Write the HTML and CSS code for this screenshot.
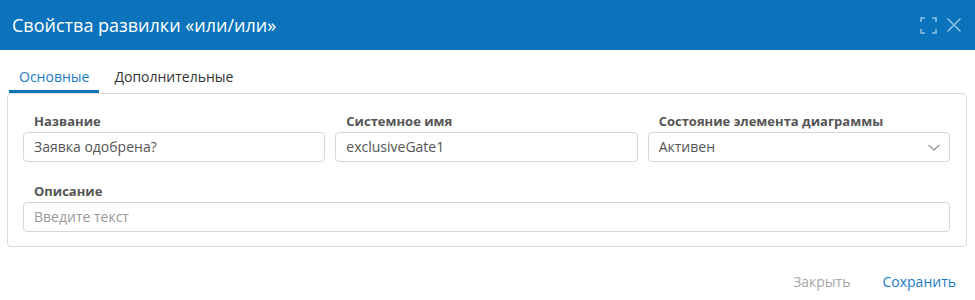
FILE: index.html
```html
<!DOCTYPE html>
<html lang="ru">
<head>
<meta charset="utf-8">
<link rel="stylesheet" href="styles.css">
</head>
<body>
<div class="dialog">
  <div class="header">
    <div class="title">Свойства развилки «или/или»</div>
    <div class="header-icons">
      <svg class="icon" width="17" height="17" viewBox="0 0 17 17" fill="none" stroke="currentColor" stroke-width="1.6">
        <path d="M1 5V1h4M12 1h4v4M16 12v4h-4M5 16H1v-4"/>
      </svg>
      <svg class="icon" width="16" height="16" viewBox="0 0 16 16" fill="none" stroke="currentColor" stroke-width="1.6">
        <path d="M1.5 1.5l13 13M14.5 1.5l-13 13"/>
      </svg>
    </div>
  </div>
  <div class="tabs">
    <div class="tab active">Основные</div>
    <div class="tab">Дополнительные</div>
  </div>
  <div class="panel">
    <div class="grid">
      <div class="field">
        <div class="label">Название</div>
        <div class="input">Заявка одобрена?</div>
      </div>
      <div class="field">
        <div class="label">Системное имя</div>
        <div class="input">exclusiveGate1</div>
      </div>
      <div class="field">
        <div class="label">Состояние элемента диаграммы</div>
        <div class="input select">
          <span>Активен</span>
          <svg class="chevron" width="12" height="7" viewBox="0 0 12 7" fill="none" stroke="#888" stroke-width="1.1">
            <path d="M0.5 0.8l5.5 5.2 5.5-5.2"/>
          </svg>
        </div>
      </div>
      <div class="field wide">
        <div class="label">Описание</div>
        <div class="input placeholder">Введите текст</div>
      </div>
    </div>
  </div>
  <div class="footer">
    <span class="btn btn-close">Закрыть</span>
    <span class="btn btn-save">Сохранить</span>
  </div>
</div>
</body>
</html>
```
FILE: styles.css
```css
* { box-sizing: border-box; }
html, body { margin: 0; padding: 0; background: #fff; }
body {
  font-family: "Open Sans", "Noto Sans", sans-serif;
  color: #333;
  width: 975px;
  height: 300px;
  overflow: hidden;
}
.header {
  height: 50px;
  background: #0a73bc;
  display: flex;
  align-items: center;
  justify-content: space-between;
  padding: 0 13px 0 12px;
}
.title {
  color: #fff;
  font-size: 18px;
  line-height: 24px;
}
.header-icons {
  display: flex;
  align-items: center;
  gap: 9px;
  color: #8fc0e6;
}
.icon { display: block; }
.tabs {
  height: 43px;
  display: flex;
  align-items: flex-end;
  padding-left: 9px;
}
.tab {
  font-size: 14px;
  line-height: 20px;
  padding: 0 10px 3px;
  border-bottom: 3px solid transparent;
  margin-right: 5px;
  color: #333;
}
.tab.active {
  color: #1a7cc7;
  border-bottom-color: #0a73bc;
}
.panel {
  margin: 0 8px 0 7px;
  border: 1px solid #dadada;
  border-radius: 4px;
  padding: 18px 16px 14px 15px;
}
.grid {
  display: grid;
  grid-template-columns: 1fr 1fr 1fr;
  column-gap: 10px;
  row-gap: 20px;
}
.wide { grid-column: 1 / 4; }
.label {
  font-size: 13px;
  font-weight: 700;
  line-height: 18px;
  color: #555;
  padding-left: 11px;
  margin-bottom: 2px;
}
.input {
  height: 30px;
  border: 1px solid #d6d6d6;
  border-radius: 4px;
  padding: 0 10px;
  font-size: 14px;
  line-height: 28px;
  color: #555;
  display: flex;
  align-items: center;
}
.placeholder { color: #999; }
.select { justify-content: space-between; }
.chevron { margin-right: -1px; }
.footer {
  display: flex;
  justify-content: flex-end;
  gap: 32px;
  padding: 25px 19px 0 0;
}
.btn {
  font-size: 14px;
  line-height: 20px;
}
.btn-close { color: #a6a6a6; }
.btn-save { color: #1a7cc7; }
```
